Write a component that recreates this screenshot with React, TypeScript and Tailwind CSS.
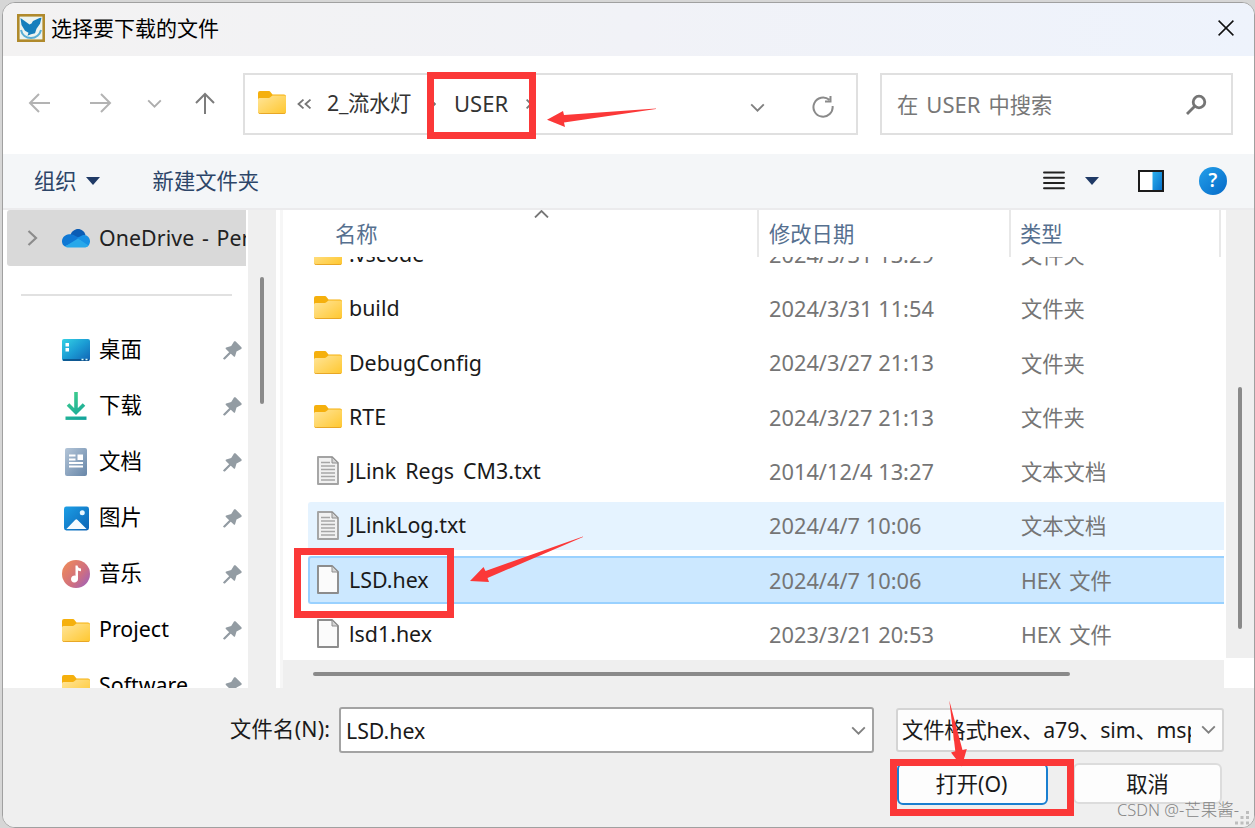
import { useState } from "react";

const sidebarItems = [
  { name: "桌面", icon: "desktop" },
  { name: "下载", icon: "download" },
  { name: "文档", icon: "document" },
  { name: "图片", icon: "picture" },
  { name: "音乐", icon: "music" },
  { name: "Project", icon: "folder" },
  { name: "Software", icon: "folder" },
];

const files = [
  { name: ".vscode", date: "2024/3/31 13:29", type: "文件夹", icon: "folder" },
  { name: "build", date: "2024/3/31 11:54", type: "文件夹", icon: "folder" },
  { name: "DebugConfig", date: "2024/3/27 21:13", type: "文件夹", icon: "folder" },
  { name: "RTE", date: "2024/3/27 21:13", type: "文件夹", icon: "folder" },
  { name: "JLink Regs CM3.txt", date: "2014/12/4 13:27", type: "文本文档", icon: "text" },
  { name: "JLinkLog.txt", date: "2024/4/7 10:06", type: "文本文档", icon: "text" },
  { name: "LSD.hex", date: "2024/4/7 10:06", type: "HEX 文件", icon: "file" },
  { name: "lsd1.hex", date: "2023/3/21 20:53", type: "HEX 文件", icon: "file" },
];

function FolderIcon() {
  return (
    <svg width="28" height="23" viewBox="0 0 28 23" className="shrink-0">
      <defs>
        <linearGradient id="folder" x1="0" y1="0" x2="1" y2="1">
          <stop offset="0" stopColor="#ffe59a" />
          <stop offset="1" stopColor="#ffc72e" />
        </linearGradient>
      </defs>
      <path d="M0 2a2 2 0 0 1 2-2h8.500c1 0 1.500.4 2 1l2 2.500H26a2 2 0 0 1 2 2V12H0z" fill="#f5b00d" />
      <path d="M0 8.500a1.500 1.500 0 0 1 1.500-1.500H10c1.500 0 2.500-.6 3.300-1.500.6-.7 1-1 2-1H26.500A1.500 1.500 0 0 1 28 6v15a2 2 0 0 1-2 2H2a2 2 0 0 1-2-2z" fill="url(#folder)" />
      <path d="M.6 21.700c.4.600.9.900 1.600.900h23.600c.700 0 1.200-.3 1.600-.9" fill="none" stroke="#e6a323" />
    </svg>
  );
}

function PageIcon({ lined }: { lined?: boolean }) {
  return (
    <svg width="22" height="29" viewBox="0 0 22 29" className="shrink-0">
      <path d="M1 1h14l6 6v21H1z" fill={lined ? "#f1f1f1" : "#fbfbfb"} stroke={lined ? "#a3a3a3" : "#8c8c8c"} strokeWidth="1.900" strokeLinejoin="round" />
      <path d="M15 1v6h6z" fill="#d5d5d5" stroke="#8f8f8f" />
      {lined && <path d="M4 6.500h9M4 10h14M4 13.500h14M4 17h14M4 20.500h14M4 24h14" stroke="#a6a6a6" strokeWidth="1.400" />}
    </svg>
  );
}

function SidebarIcon({ icon }: { icon: string }) {
  if (icon === "folder") return <FolderIcon />;
  if (icon === "desktop") {
    return (
      <svg width="28" height="22" viewBox="0 0 28 22">
        <defs>
          <linearGradient id="desk" x1="0" y1="0" x2="1" y2="1">
            <stop offset="0" stopColor="#35d2e4" />
            <stop offset=".5" stopColor="#1b9cd4" />
            <stop offset="1" stopColor="#1163b4" />
          </linearGradient>
        </defs>
        <rect width="28" height="22" rx="2" fill="url(#desk)" />
        <path d="M3.500 4h3.500v3.500H3.500zM3.500 9h3.500v3.500H3.500z" fill="#fff" />
        <path d="M1 21h26" stroke="#0b4a80" strokeWidth="1.500" />
        <path d="M19.500 20.500h2M23.500 20.500h2" stroke="#dff" strokeWidth="1.500" />
      </svg>
    );
  }
  if (icon === "download") {
    return (
      <svg width="22" height="28" viewBox="0 0 22 28" fill="none" stroke="url(#down)" strokeWidth="3.600">
        <defs>
          <linearGradient id="down" gradientUnits="userSpaceOnUse" x1="2" y1="0" x2="18" y2="28">
            <stop offset="0" stopColor="#43d18b" />
            <stop offset="1" stopColor="#12a39c" />
          </linearGradient>
        </defs>
        <path d="M11 0v21M3 12.500l8 8 8-8" />
        <path d="M.5 26.200h21" strokeWidth="3.400" />
      </svg>
    );
  }
  if (icon === "document") {
    return (
      <svg width="22" height="28" viewBox="0 0 22 28">
        <defs>
          <linearGradient id="doc" x1="0" y1="0" x2="1" y2="1">
            <stop offset="0" stopColor="#b3c5d8" />
            <stop offset="1" stopColor="#6786a8" />
          </linearGradient>
        </defs>
        <rect width="22" height="28" rx="2" fill="url(#doc)" />
        <path d="M4 7.500h6.500M4 11.500h6.500M4 15h14M4 18.500h14" stroke="#fff" strokeWidth="1.800" />
        <path d="M12.500 6.500H18V12h-5.500z" fill="#fff" />
      </svg>
    );
  }
  if (icon === "picture") {
    return (
      <svg width="25" height="25" viewBox="0 0 26 25">
        <defs>
          <linearGradient id="pic" x1="0" y1="0" x2="1" y2="1">
            <stop offset="0" stopColor="#1c9fe6" />
            <stop offset="1" stopColor="#0c62b4" />
          </linearGradient>
        </defs>
        <rect width="26" height="25" rx="2.500" fill="url(#pic)" />
        <path d="M2.500 23.500L11.500 14a1.800 1.800 0 0 1 2.600 0l9.400 9.500z" fill="#f4faff" />
        <circle cx="19" cy="6.500" r="2.600" fill="#e8f6ff" />
      </svg>
    );
  }
  return (
    <svg width="28" height="28" viewBox="0 0 28 28">
      <defs>
        <linearGradient id="mus" x1="0" y1=".1" x2="1" y2=".9">
          <stop offset="0" stopColor="#f08b57" />
          <stop offset=".6" stopColor="#cf6f80" />
          <stop offset="1" stopColor="#9c60bd" />
        </linearGradient>
      </defs>
      <circle cx="14" cy="14" r="14" fill="url(#mus)" />
      <path d="M13.500 5.500h2c.3 2 1.500 2.800 3.500 3v2.700c-1.300 0-2.200-.3-3-.8v8.600a3.500 3.500 0 1 1-2.500-3.300z" fill="#fff" />
    </svg>
  );
}

function PinIcon() {
  return (
    <svg width="19" height="19" viewBox="0 0 19 19" fill="#939ca3">
      <path d="M11 .6c.5-.5 1.200-.5 1.700 0l5.700 5.700c.5.500.4 1.300-.2 1.600l-4.700 2.700-1.400 4.600c-.2.600-.9.800-1.300.3l-3.500-3.300-5.500 5.500-1.600.6.500-1.500 5.500-5.500-3.300-3.300c-.5-.5-.3-1.200.3-1.400L8.200 5z" />
      <path d="M.9 18.100l6.500-6.500" stroke="#939ca3" strokeWidth="2" />
    </svg>
  );
}

function Chevron({ color = "#808080" }: { color?: string }) {
  return (
    <svg width="15" height="9" viewBox="0 0 16 10" fill="none" stroke={color} strokeWidth="2.100">
      <path d="M1 1.500l7 7 7-7" />
    </svg>
  );
}

function TitleBar() {
  return (
    <div className="flex h-[53px] shrink-0 items-center bg-linear-to-r from-[#f3f2f2] via-[#f1f2f7] to-[#eef3fc] pb-[3px] pl-[14px] pr-[20px]">
      <svg width="28" height="28" viewBox="0 0 28 28">
        <rect x="1.300" y="1.300" width="25.400" height="25.400" fill="#edf4f0" stroke="#b08a2c" strokeWidth="2.600" />
        <path d="M3.500 4l3.500 2.500 5.500 4 2-1 1.500-2.500L22.500 4l2-.2-1.500 6-3.500 5-1.500 4.500-4 1-3.500 1.500 1-3-3.500-2L4.500 11z" fill="#157fbd" />
        <path d="M4 16c1 5 5 8 10 8s9-3.500 10-8" fill="none" stroke="#5aaed4" strokeWidth="2" />
      </svg>
      <div className="ml-[6px] flex-1 text-[21px] text-black">选择要下载的文件</div>
      <svg width="16" height="16" viewBox="0 0 16 16" stroke="#111" strokeWidth="1.500">
        <path d="M.6.600l14.800 14.800M15.400.600L.6 15.400" />
      </svg>
    </div>
  );
}

function NavBar() {
  return (
    <div className="flex h-[98px] shrink-0 items-start bg-white pl-[24px] pr-[21px] pt-[17px]">
      <div className="flex h-[60px] w-[216px] items-center">
        <svg width="22" height="20" viewBox="0 0 22 20" fill="none" stroke="#b3b3b3" strokeWidth="2" className="ml-[1px]">
          <path d="M22 10H2M11 1l-9 9 9 9" />
        </svg>
        <svg width="22" height="20" viewBox="0 0 22 20" fill="none" stroke="#b3b3b3" strokeWidth="2" className="ml-[40px]">
          <path d="M0 10h20M11 1l9 9-9 9" />
        </svg>
        <div className="ml-[35px]"><Chevron color="#adadad" /></div>
        <svg width="20" height="22" viewBox="0 0 20 22" fill="none" stroke="#7c7c7c" strokeWidth="2" className="ml-[33px]">
          <path d="M10 22V2M1 11l9-9 9 9" />
        </svg>
      </div>
      <div className="flex h-[62px] w-[615px] items-center border-2 border-[#e0e0e0] pl-[13px] text-[21.300px] text-[#333]">
        <div className="-mt-[3px] flex"><FolderIcon /></div>
        <svg width="15" height="10" viewBox="0 0 15 10" fill="none" stroke="#777" strokeWidth="1.800" className="ml-[11px]">
          <path d="M6.500.600L1.500 5l5 4.400M13.500.600L8.500 5l5 4.400" />
        </svg>
        <div className="-mt-[3px] ml-[15px] w-[84px] whitespace-nowrap tracking-[-0.300px]">2_流水灯</div>
        <svg width="6" height="10" viewBox="0 0 6 10" fill="none" stroke="#777" strokeWidth="1.800" className="ml-[19px]">
          <path d="M.6.600L5 5 .6 9.400" />
        </svg>
        <div className="-mt-[3px] ml-[18px] w-[57px] text-[22px]">USER</div>
        <svg width="6" height="10" viewBox="0 0 6 10" fill="none" stroke="#777" strokeWidth="1.800" className="ml-[15px]">
          <path d="M.6.600L5 5 .6 9.400" />
        </svg>
        <div className="ml-auto mt-[6px]"><Chevron /></div>
        <svg width="22" height="22" viewBox="0 0 22 22" fill="none" stroke="#8a8a8a" strokeWidth="2" className="ml-[47px] mr-[22px] mt-[5px]">
          <path d="M20.600 10A9.600 9.600 0 1 1 17.300 3.800M18.500 0v5.500H13" />
        </svg>
      </div>
      <div className="ml-auto flex h-[62px] w-[353px] items-center border-2 border-[#e0e0e0] pl-[15px] pr-[24px] text-[21.300px] text-[#777]">
        <div className="flex-1 [word-spacing:2.500px]">在 <span className="text-[22px]">USER</span> 中搜索</div>
        <svg width="21" height="21" viewBox="0 0 21 21" fill="none" stroke="#757575">
          <circle cx="13" cy="8" r="5.800" strokeWidth="2.800" />
          <path d="M8.500 12.500L1 20" strokeWidth="2.800" />
        </svg>
      </div>
    </div>
  );
}

function Toolbar() {
  return (
    <div className="flex h-[56px] shrink-0 items-center border-b-2 border-[#ebebed] bg-[#f4f6f8] pl-[31px] pr-[27px] pb-[1px] text-[21.300px] text-[#2c4568]">
      <div className="pt-[1px]">组织</div>
      <svg width="14" height="8" viewBox="0 0 14 8" className="ml-[9px]"><path d="M0 0h14L7 8z" fill="#1f3a66" /></svg>
      <div className="ml-[53px] flex-1 pt-[1px]">新建文件夹</div>
      <svg width="22" height="19" viewBox="0 0 22 19" stroke="#222" strokeWidth="1.900" strokeLinecap="round">
        <path d="M1 1.500h20M1 6.700h20M1 12h20M1 17.300h20" />
      </svg>
      <svg width="14" height="8" viewBox="0 0 14 8" className="ml-[20px]"><path d="M0 0h14L7 8z" fill="#1f3a66" /></svg>
      <svg width="26" height="22" viewBox="0 0 26 22" className="ml-[39px]">
        <defs>
          <linearGradient id="pane" x1="0" y1="0" x2="1" y2="1">
            <stop offset="0" stopColor="#2bb0ee" />
            <stop offset="1" stopColor="#0872cb" />
          </linearGradient>
        </defs>
        <rect x="1" y="1" width="24" height="20" fill="#fff" stroke="#1b1b1b" strokeWidth="2" />
        <path d="M14.500 2H24v18h-9.500z" fill="url(#pane)" />
      </svg>
      <div className="ml-[35px] flex size-7 items-center justify-center rounded-full bg-linear-to-br from-[#24a0ea] to-[#0669c7] text-[19px] font-semibold leading-none text-white">?</div>
    </div>
  );
}

function Sidebar() {
  return (
    <div className="flex w-[273px] shrink-0">
      <div className="w-[245px] overflow-hidden pl-1">
        <div className="flex h-[56px] w-[239px] items-center overflow-hidden rounded-l-[3px] bg-[#d9d9d9] pl-[20px]">
          <svg width="11" height="16" viewBox="0 0 11 16" fill="none" stroke="#8c8c8c" strokeWidth="2.200" className="shrink-0">
            <path d="M1.500 1l7.500 7-7.500 7" />
          </svg>
          <svg width="28" height="19" viewBox="0 0 28 19" className="ml-[24px] shrink-0">
            <path d="M8 7C9.500 2 13 0 16 0c3.500 0 6.500 2.500 7.500 6l-5 5z" fill="#0a5cb4" />
            <path d="M0 12.500C0 8.500 3 5.500 7 5.200c3-.2 5 .8 7 2L19 10 3 17.500C1 16.500 0 14.500 0 12.500z" fill="#0f78d4" />
            <path d="M15 9l6-3c4-.8 7 2.500 7 6.300 0 2.200-1 4-2.500 5.200z" fill="#1790e4" />
            <path d="M3 17.500L16 9.500l10.500 7c-1 1.500-2.500 2-4.500 2H6.500c-1.500 0-2.500-.3-3.500-1z" fill="#28a8ea" />
          </svg>
          <div className="ml-[9px] whitespace-nowrap text-[21.300px] tracking-[0.100px] [word-spacing:2px] text-[#222]">OneDrive - Personal</div>
        </div>
        <div className="ml-[14px] mt-[28px] h-[2px] w-[211px] bg-[#e1e1e1]" />
        <div className="mt-[25px]">
          {sidebarItems.map((item) => (
            <div key={item.name} className="flex h-[56px] items-center pl-[55px] pr-[6px]">
              <div className="flex w-[28px] shrink-0 justify-center pt-[2px]"><SidebarIcon icon={item.icon} /></div>
              <div className="ml-[9px] flex-1 text-[21.400px] text-black">{item.name}</div>
              <div className="pt-[2px]"><PinIcon /></div>
            </div>
          ))}
        </div>
      </div>
      <div className="flex w-[28px] justify-center bg-[#efefef]">
        <div className="mt-[67px] h-[127px] w-[3.500px] rounded-full bg-[#8a8a8a]" />
      </div>
    </div>
  );
}

function FileList() {
  const [selected, setSelected] = useState("LSD.hex");

  return (
    <div className="ml-[4px] flex min-w-0 flex-1 flex-col border-l-3 border-[#f6f6f6]">
      <div className="flex min-h-0 flex-1">
        <div className="flex w-[943px] flex-col">
          <div className="relative flex h-[47px] shrink-0 text-[21.300px] text-[#56708f]">
            <svg width="15" height="8" viewBox="0 0 15 8" fill="none" stroke="#777" strokeWidth="1.800" className="absolute left-[251px] top-0">
              <path d="M1 7.500l6.500-6.500L14 7.500" />
            </svg>
            <div className="flex w-[476px] items-center border-r-2 border-[#e8e8e8] pl-[52px]">名称</div>
            <div className="flex w-[252px] items-center border-r-2 border-[#e8e8e8] pl-[10px]">修改日期</div>
            <div className="flex w-[210px] items-center border-r-2 border-[#e8e8e8] pl-[9px]">类型</div>
          </div>
          <div className="h-[403px] overflow-hidden">
            <div className="-mt-[29.500px]">
              {files.map((file) => (
                <div key={file.name} className="flex h-[54.300px] items-center pl-[25px]">
                  <div
                    onClick={() => setSelected(file.name)}
                    className={`flex h-[48px] w-[916px] items-center rounded-l-[3px] border-2 border-r-0 pl-[4px] ${
                      selected === file.name
                        ? "border-[#99d1ff] bg-[#cce8ff]"
                        : file.name === "JLinkLog.txt"
                          ? "border-[#e5f3ff] bg-[#e5f3ff]"
                          : "border-transparent"
                    }`}
                  >
                    <div className="flex w-[28px] shrink-0 justify-center pb-[2px]">
                      {file.icon === "folder" ? <FolderIcon /> : <PageIcon lined={file.icon === "text"} />}
                    </div>
                    <div className="ml-[7px] w-[420px] pb-[2px] text-[21.400px] [word-spacing:3.500px] text-[#1a1a1a]">{file.name}</div>
                    <div className="w-[252px] text-[21.800px] text-[#757575]">{file.date}</div>
                    <div className="text-[21.300px] [word-spacing:2.500px] text-[#757575]">{file.type}</div>
                  </div>
                </div>
              ))}
            </div>
          </div>
        </div>
        <div className="flex w-[28px] shrink-0 flex-col items-center bg-[#efefef]">
          <div className="mt-[177px] h-[242px] w-[3.500px] rounded-full bg-[#8a8a8a]" />
          <div className="mt-auto h-[2px] w-full bg-white" />
        </div>
      </div>
      <div className="flex h-[28px] w-[941px] shrink-0 items-center bg-[#efefef] pl-[30px]">
        <div className="h-[3.500px] w-[757px] rounded-full bg-[#8a8a8a]" />
      </div>
    </div>
  );
}

function Footer() {
  return (
    <div className="flex h-[139px] shrink-0 flex-col bg-[#efefef] pt-[19px] text-[21.300px] text-[#1a1a1a]">
      <div className="flex items-center">
        <div className="-mt-[2px] ml-[227px] w-[109px] whitespace-nowrap tracking-[0.250px]">文件名(N):</div>
        <div className="flex h-[46px] w-[535px] items-center rounded-[3px] border-2 border-[#a3a3a3] bg-white pl-[5px] pr-[6px]">
          <div className="flex-1 pt-[1px] text-[21.300px]">LSD.hex</div>
          <Chevron />
        </div>
        <div className="-mt-[1px] ml-[22px] flex h-[44px] w-[328px] items-center rounded-[3px] border-2 border-[#d4d4d4] bg-[#fdfdfd] pl-[4px] pr-[6px]">
          <div className="w-[289px] overflow-hidden whitespace-nowrap py-1 tracking-[-0.150px]">文件格式hex、a79、sim、msp</div>
          <div className="ml-auto"><Chevron /></div>
        </div>
      </div>
      <div className="mt-[10px] flex">
        <button className="ml-[894px] flex h-[42px] w-[151px] items-center justify-center rounded-[6px] border-2 border-[#1a7fd0] bg-[#fdfdfd] pr-[2px]">打开(O)</button>
        <button className="ml-[25px] flex h-[41px] w-[149px] items-center justify-center rounded-[6px] border-2 border-[#dcdcdc] bg-[#fdfdfd]">取消</button>
      </div>
    </div>
  );
}

export default function App() {
  return (
    <div className="relative h-[828px] w-[1255px] overflow-hidden bg-[#d6d6d6] pl-[2px] pt-[2px] font-['Noto_Sans','Noto_Sans_CJK_SC',sans-serif] leading-none">
      <div className="flex h-[826px] w-[1253px] flex-col overflow-hidden rounded-[13px] border border-[#a0a0a0] bg-white">
        <TitleBar />
        <NavBar />
        <Toolbar />
        <div className="flex h-[478px] shrink-0 bg-white">
          <Sidebar />
          <FileList />
        </div>
        <Footer />
      </div>

      {/* Annotations */}
      <div className="absolute left-[427px] top-[72px] h-[67px] w-[109px] border-[7px] border-[#fb3838]" />
      <div className="absolute left-[294px] top-[548px] h-[70px] w-[160px] border-[7px] border-[#fb3838]" />
      <div className="absolute left-[890px] top-[759px] h-[57px] w-[184px] border-[7px] border-[#fb3838]" />
      <svg width="1255" height="828" viewBox="0 0 1255 828" fill="#fb3838" className="pointer-events-none absolute left-0 top-0">
        <path d="M547 119.700L563 111l1 4 92-6.500v.500L564 122.500l1 4.500z" />
        <path d="M470 581l13.500-14 2 4L583 536.600v.400l-95.500 41 1.500 4z" />
        <path d="M949.300 700.500L962.500 750l4.300-1-5 17.500L951 752.500l4.300-1.200z" />
        <g fill="#bdbdbd">
          <path d="M1246 811h3v3h-3zM1240.500 816h3v3h-3zM1246 816h3v3h-3zM1235 821.500h3v3h-3zM1240.500 821.500h3v3h-3zM1246 821.500h3v3h-3z" />
        </g>
      </svg>
      <div className="absolute left-[1117px] top-[802px] whitespace-nowrap text-[16.500px] font-light text-[#858585]">CSDN @-芒果酱-</div>
    </div>
  );
}
